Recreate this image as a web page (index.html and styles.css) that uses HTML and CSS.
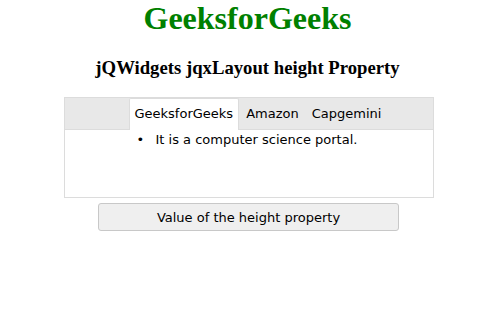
FILE: index.html
```html
<!DOCTYPE html>
<html>
<head>
<meta charset="utf-8">
<link rel="stylesheet" href="styles.css">
</head>
<body>
<div class="page">
  <h1 class="title">GeeksforGeeks</h1>
  <h3 class="subtitle">jQWidgets jqxLayout height Property</h3>
  <div class="layout">
    <div class="tabbar">
      <div class="tab active">GeeksforGeeks</div>
      <div class="tab">Amazon</div>
      <div class="tab">Capgemini</div>
    </div>
    <div class="content">
      <ul class="list">
        <li>It is a computer science portal.</li>
      </ul>
    </div>
  </div>
  <button class="btn">Value of the height property</button>
</div>
</body>
</html>
```
FILE: styles.css
```css
html, body {
  margin: 0;
  padding: 0;
  background: #fff;
}
.page {
  display: flex;
  flex-direction: column;
  align-items: center;
  font-family: "Liberation Serif", serif;
}
.title {
  margin: 0;
  color: #008000;
  font-size: 32px;
  line-height: 37px;
  font-weight: bold;
}
.subtitle {
  margin: 20px 0 0 0;
  font-size: 18.72px;
  line-height: 22px;
  font-weight: bold;
  color: #000;
}
.layout {
  margin-top: 18px;
  margin-left: 2px;
  width: 368px;
  height: 99px;
  border: 1px solid #dcdcdc;
  display: flex;
  flex-direction: column;
  font-family: "DejaVu Sans", sans-serif;
  font-size: 13px;
  color: #000;
}
.tabbar {
  height: 31px;
  background: #e8e8e8;
  border-bottom: 1px solid #dcdcdc;
  display: flex;
  padding-left: 64px;
  align-items: flex-end;
}
.tab {
  height: 30px;
  line-height: 30px;
  padding: 0 5px;
  margin-right: 1px;
  border: 1px solid transparent;
  border-bottom: none;
}
.tab.active {
  background: #fff;
  border-color: #dcdcdc;
  margin-bottom: -1px;
  height: 31px;
  border-radius: 2px 2px 0 0;
}
.content {
  flex: 1;
  background: #fff;
}
.list {
  margin: 2px 0 0 0;
  padding-left: 72px;
  line-height: 16px;
  list-style: none;
}
.list li::before {
  content: "\2022";
  display: inline-block;
  width: 19px;
}
.btn {
  margin-top: 5px;
  margin-left: 2px;
  width: 301px;
  height: 28px;
  background: #efefef;
  border: 1px solid #c8c8c8;
  border-radius: 3px;
  font-family: "DejaVu Sans", sans-serif;
  font-size: 13px;
  color: #000;
  padding: 0;
}
```
